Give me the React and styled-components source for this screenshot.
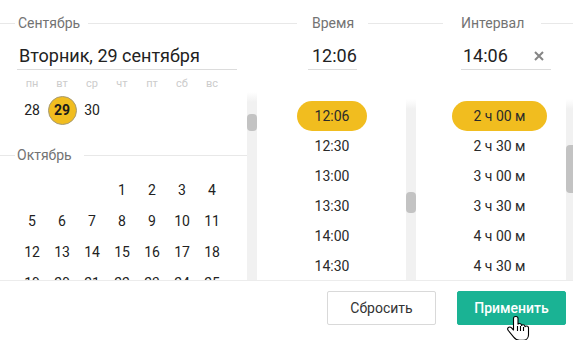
import styled, { createGlobalStyle } from 'styled-components'

const GlobalStyle = createGlobalStyle`
    body {
        margin: 0;
        background: #fff;
        font-family: Roboto, "Liberation Sans", sans-serif;
        overflow: hidden;
    }
`

const weekdays = ['пн', 'вт', 'ср', 'чт', 'пт', 'сб', 'вс']
const october = [null, null, null, 1, 2, 3, 4, 5, 6, 7, 8, 9, 10, 11, 12, 13, 14, 15, 16, 17, 18, 19, 20, 21, 22, 23, 24, 25]
const times = ['12:06', '12:30', '13:00', '13:30', '14:00', '14:30', '15:00']
const intervals = ['2 ч 00 м', '2 ч 30 м', '3 ч 00 м', '3 ч 30 м', '4 ч 00 м', '4 ч 30 м', '5 ч 00 м']

export default function App() {
    return (
        <Panel>
            <GlobalStyle />
            <Main>
                <Column $width={297}>
                    <Legend $lead={15} $left={3} $right={8}><span>Сентябрь</span></Legend>
                    <Field $ml={17} $width={220} $pl={2}>Вторник, 29 сентября</Field>
                    <Weekdays>
                        {weekdays.map(d => <span key={d}>{d}</span>)}
                    </Weekdays>
                    <ScrollRow>
                        <CalList>
                            <DaysGrid $row={30}>
                                <Day>28</Day>
                                <Day><Selected>29</Selected></Day>
                                <Day>30</Day>
                            </DaysGrid>
                            <Legend $lead={15} $left={2} $right={12} $top={22} $h={16} $bottom={11}>
                                <span>Октябрь</span>
                            </Legend>
                            <DaysGrid $row={31}>
                                {october.map((d, i) => <Day key={i}>{d}</Day>)}
                            </DaysGrid>
                        </CalList>
                        <Track $thumbTop={22} $thumbHeight={17}><div /></Track>
                    </ScrollRow>
                </Column>

                <Column $width={146}>
                    <Legend $lead={0} $left={15} $right={14}><span>Время</span></Legend>
                    <Field $ml={11} $width={49} $pl={4}>12:06</Field>
                    <ScrollRow $top={29}>
                        <List $width={70}>
                            {times.map((t, i) => <Item key={t} $active={i === 0}>{t}</Item>)}
                        </List>
                        <Track $gap={39} $thumbTop={93} $thumbHeight={21}><div /></Track>
                    </ScrollRow>
                </Column>

                <Column $width={130}>
                    <Legend $lead={0} $left={18} $right={17}><span>Интервал</span></Legend>
                    <Field $ml={18} $width={90} $pl={2}>
                        14:06
                        <ClearIcon viewBox="0 0 10 10">
                            <path d="M1 1L9 9M9 1L1 9" />
                        </ClearIcon>
                    </Field>
                    <ScrollRow $top={29} $pl={9}>
                        <List $width={95} $shift={22}>
                            {intervals.map((t, i) => <Item key={t} $active={i === 0}>{t}</Item>)}
                        </List>
                        <Track $gap={19} $thumbTop={46} $thumbHeight={48}><div /></Track>
                    </ScrollRow>
                </Column>
            </Main>

            <Footer>
                <Button>Сбросить</Button>
                <Button $primary>Применить</Button>
            </Footer>

            <Cursor viewBox="0 0 24 30">
                <path d="M8.5 1.5c-1.2 0-2 .9-2 2v11.5l-2.2-2.3c-.9-.9-2.3-.9-3.1 0-.7.8-.6 2 .1 2.8l5.4 6.6c1.4 1.8 3.3 3.2 5.8 3.2h3.6c3.2 0 5.4-2.5 5.4-5.6V13c0-1.1-.9-2-2-2-.6 0-1.1.3-1.5.7 0-1.1-.9-2-2-2-.6 0-1.2.3-1.5.8 0-1.1-.9-2-2-2-.5 0-1 .2-1.5.6V3.5c0-1.100-.8-2-2-2z" />
                <path d="M10.5 11v5M13.5 11v5M16.5 12v4" />
            </Cursor>
        </Panel>
    )
}

const Panel = styled.div`
    position: relative;
    width: 573px;
    height: 340px;
    overflow: hidden;
    background: #fff;
`

const Main = styled.div`
    display: flex;
    height: 280px;
`

const Column = styled.div`
    width: ${p => p.$width}px;
    flex-shrink: 0;
    height: 280px;
    display: flex;
    flex-direction: column;
    overflow: hidden;
`

const Legend = styled.div`
    display: flex;
    align-items: center;
    flex-shrink: 0;
    height: ${p => p.$h || 18}px;
    margin-top: ${p => p.$top ?? 14}px;
    margin-bottom: ${p => p.$bottom || 0}px;
    font-size: 14px;
    color: #737373;

    &::before {
        content: '';
        width: ${p => p.$lead}px;
        height: 1px;
        background: #e8e8e8;
    }
    &::after {
        content: '';
        flex: 1;
        height: 1px;
        background: #e8e8e8;
    }
    span {
        padding: 0 ${p => p.$right}px 0 ${p => p.$left}px;
    }
`

const Field = styled.div`
    display: flex;
    align-items: center;
    justify-content: space-between;
    flex-shrink: 0;
    box-sizing: border-box;
    margin-top: 10px;
    margin-left: ${p => p.$ml}px;
    width: ${p => p.$width}px;
    height: 28px;
    padding: 0 7px 0 ${p => p.$pl}px;
    border-bottom: 1px solid #dcdcdc;
    font-size: 18px;
    color: #222;
    white-space: nowrap;
`

const ClearIcon = styled.svg`
    width: 10px;
    height: 10px;
    stroke: #858585;
    stroke-width: 2;
    fill: none;
`

const Weekdays = styled.div`
    display: grid;
    grid-template-columns: repeat(7, 30px);
    flex-shrink: 0;
    height: 16px;
    margin-top: 6px;
    padding-left: 17px;
    font-size: 11px;
    line-height: 16px;
    color: #cccccc;
    text-align: center;
`

const ScrollRow = styled.div`
    flex: 1;
    min-height: 0;
    display: flex;
    margin-top: ${p => p.$top || 0}px;
    padding-left: ${p => p.$pl || 0}px;
`

const CalList = styled.div`
    width: 247px;
    overflow: hidden;
    padding-top: 3px;
`

const DaysGrid = styled.div`
    display: grid;
    grid-template-columns: repeat(7, 30px);
    grid-auto-rows: ${p => p.$row}px;
    padding-left: 17px;
`

const Day = styled.div`
    display: flex;
    align-items: center;
    justify-content: center;
    font-size: 14px;
    color: #222;
`

const Selected = styled.div`
    display: flex;
    align-items: center;
    justify-content: center;
    box-sizing: border-box;
    width: 29px;
    height: 29px;
    border-radius: 50%;
    border: 1.5px solid #a69a74;
    background: #f1bd1f;
    font-weight: 700;
    color: #1a1a1a;
`

const List = styled.div`
    width: ${p => p.$width}px;
    flex-shrink: 0;
    overflow: hidden;
    padding-top: 2px;
`

const Item = styled.div`
    display: flex;
    align-items: center;
    justify-content: center;
    box-sizing: border-box;
    height: 30px;
    padding-left: ${p => p.$shift || 0}px;
    border-radius: 15px;
    background: ${p => (p.$active ? '#f1bd1f' : 'transparent')};
    font-size: 14px;
    color: #2a2a2a;
    white-space: nowrap;
`

const Track = styled.div`
    width: 10px;
    flex-shrink: 0;
    margin-left: ${p => p.$gap || 0}px;
    padding-top: ${p => p.$thumbTop}px;
    box-sizing: border-box;
    background: linear-gradient(to bottom, #fff 0, #f1f1f1 10px);

    > div {
        height: ${p => p.$thumbHeight}px;
        border-radius: 4px;
        background: #c3c3c3;
    }
`

const Footer = styled.div`
    display: flex;
    justify-content: flex-end;
    align-items: flex-start;
    gap: 21px;
    height: 59px;
    padding: 10px 7px 0 0;
    box-sizing: border-box;
    border-top: 1px solid #ececec;
`

const Button = styled.button`
    width: 109px;
    height: 34px;
    border-radius: 2px;
    border: 1px solid ${p => (p.$primary ? '#1ab394' : '#d9d9d9')};
    background: ${p => (p.$primary ? '#1ab394' : '#fff')};
    color: ${p => (p.$primary ? '#fff' : '#333')};
    font-family: Roboto, "Liberation Sans", sans-serif;
    font-size: 14px;
    font-weight: ${p => (p.$primary ? 500 : 400)};
    padding: 0;
`

const Cursor = styled.svg`
    position: absolute;
    left: 507px;
    top: 315px;
    width: 24px;
    height: 30px;
    fill: #fff;
    stroke: #000;
    stroke-width: 1.1;
    stroke-linejoin: round;
`
